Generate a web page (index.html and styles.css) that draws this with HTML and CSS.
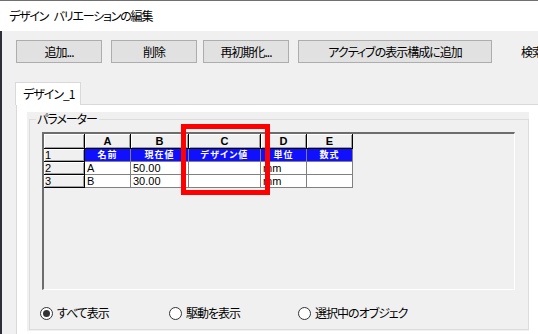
FILE: index.html
```html
<!DOCTYPE html>
<html lang="ja">
<head>
    <meta charset="UTF-8">
    <meta name="viewport" content="width=device-width, initial-scale=1.0">
    <title>デザイン バリエーションの編集</title>
    <link rel="stylesheet" href="styles.css">
</head>
<body>
    <div class="window">
        <div class="titlebar">デザイン バリエーションの編集</div>
        <div class="client">
            <div class="toolbar">
                <button class="btn btn-add">追加...</button>
                <button class="btn btn-delete">削除</button>
                <button class="btn btn-reset">再初期化...</button>
                <button class="btn btn-wide">アクティブの表示構成に追加</button>
                <span class="search-label">検索</span>
            </div>
            <div class="tabs">
                <div class="tab">デザイン_1</div>
            </div>
            <div class="tab-panel">
                <div class="group-wrap">
                    <fieldset class="group">
                        <legend>パラメーター</legend>
                        <div class="sheet">
                            <div class="sheet-grid">
                                <div class="cell head"></div>
                                <div class="cell head col">A</div>
                                <div class="cell head col">B</div>
                                <div class="cell head col">C</div>
                                <div class="cell head col">D</div>
                                <div class="cell head col">E</div>

                                <div class="cell head row">1</div>
                                <div class="cell title">名前</div>
                                <div class="cell title">現在値</div>
                                <div class="cell title">デザイン値</div>
                                <div class="cell title">単位</div>
                                <div class="cell title">数式</div>

                                <div class="cell head row">2</div>
                                <div class="cell">A</div>
                                <div class="cell">50.00</div>
                                <div class="cell"></div>
                                <div class="cell">mm</div>
                                <div class="cell"></div>

                                <div class="cell head row">3</div>
                                <div class="cell">B</div>
                                <div class="cell">30.00</div>
                                <div class="cell"></div>
                                <div class="cell">mm</div>
                                <div class="cell"></div>
                            </div>
                            <!-- highlight around column C -->
                            <div class="highlight"></div>
                        </div>
                        <div class="radios">
                            <label class="radio"><span class="dot checked"></span>すべて表示</label>
                            <label class="radio"><span class="dot"></span>駆動を表示</label>
                            <label class="radio"><span class="dot"></span>選択中のオブジェク</label>
                        </div>
                    </fieldset>
                </div>
            </div>
        </div>
    </div>
</body>
</html>
```

FILE: styles.css
```css
html, body {
    margin: 0;
    padding: 0;
    width: 538px;
    height: 334px;
    overflow: hidden;
    background: #fff;
}
body {
    font-family: "Noto Sans CJK JP", "Noto Sans", sans-serif;
    font-size: 12px;
    font-feature-settings: "palt";
    letter-spacing: -1px;
    color: #000;
}
.window {
    height: 334px;
    display: flex;
    flex-direction: column;
}
.titlebar {
    height: 30px;
    line-height: 30px;
    border-top: 1px solid #707070;
    padding-left: 9px;
    letter-spacing: -1.2px;
    word-spacing: 4px;
    background: #fff;
}
.client {
    flex: 1;
    background: #f0f0f0;
    border-left: 2px solid #2e2e3a;
    display: flex;
    flex-direction: column;
    overflow: hidden;
}
.toolbar {
    display: flex;
    align-items: center;
    padding: 9px 0 0 14px;
    white-space: nowrap;
}
.btn {
    flex-shrink: 0;
    height: 23px;
    width: 86px;
    margin: 0;
    padding: 0;
    font: inherit;
    letter-spacing: inherit;
    color: #000;
    background: #e1e1e1;
    border: 1px solid #adadad;
}
.btn-delete {
    margin-left: 9px;
}
.btn-reset {
    margin-left: 6px;
}
.btn-wide {
    width: 194px;
    margin-left: 9px;
}
.search-label {
    flex-shrink: 0;
    margin-left: 29px;
}
.tabs {
    display: flex;
    margin-top: 19px;
    padding-left: 13px;
}
.tab {
    position: relative;
    width: 57px;
    height: 22px;
    line-height: 22px;
    padding-left: 7px;
    margin-bottom: -1px;
    background: #fff;
    border: 1px solid #d9d9d9;
    border-bottom: none;
}
.tab-panel {
    flex: 1;
    margin-left: 14px;
    background: #fff;
    border-top: 1px solid #d9d9d9;
    border-left: 1px solid #d9d9d9;
    padding: 7px 0 0 10px;
}
.group-wrap {
    width: 500px;
    background: #f0f0f0;
    padding-left: 2px;
    padding-bottom: 1px;
}
.group {
    margin: 0;
    width: 500px;
    box-sizing: border-box;
    border: 1px solid #dcdcdc;
    padding: 6px 0 9px 6px;
}
.group legend {
    padding: 0 2px 0 1px;
    line-height: 14px;
}
.sheet {
    position: relative;
    width: 470px;
    height: 155px;
    margin-left: 6px;
    border-top: 2px solid #6d6d6d;
    border-left: 2px solid #6d6d6d;
    border-right: 1px solid #fff;
    border-bottom: 1px solid #fff;
    background: #f0f0f0;
}
.sheet-grid {
    display: grid;
    grid-template-columns: 41px 46px 58px 72px 46px 46px;
    grid-template-rows: 15px 13px 13px 13px;
    width: 309px;
    font-family: "Liberation Sans", Arial, sans-serif;
    font-size: 11px;
    letter-spacing: 0;
}
.cell {
    box-sizing: border-box;
    background: #fff;
    border-right: 1px solid #808080;
    border-bottom: 1px solid #808080;
    padding-left: 2px;
    line-height: 12px;
    white-space: nowrap;
    overflow: hidden;
}
.head {
    background: #f0f0f0;
    border-right-color: #000;
    border-bottom-color: #000;
    box-shadow: inset 1px 1px #fff, inset -1px -1px #a0a0a0;
}
.col {
    text-align: center;
    font-weight: bold;
    line-height: 14px;
    padding-left: 0;
}
.row {
    padding-left: 1px;
}
.title {
    background: #1010ff;
    color: #fff;
    text-align: center;
    font-family: "Noto Sans CJK JP", sans-serif;
    font-size: 9px;
    font-weight: bold;
    letter-spacing: 1px;
    padding-left: 0;
}
.highlight {
    position: absolute;
    left: 137px;
    top: -10px;
    width: 89px;
    height: 71px;
    box-sizing: border-box;
    border: 5px solid #ff0000;
}
.radios {
    display: grid;
    grid-template-columns: 129px 129px 160px;
    margin: 16px 0 0 4px;
    line-height: 14px;
}
.radio {
    display: flex;
    align-items: center;
    white-space: nowrap;
}
.dot {
    position: relative;
    width: 13px;
    height: 13px;
    box-sizing: border-box;
    border: 1px solid #333;
    border-radius: 50%;
    background: #fff;
    margin-right: 4px;
}
.dot.checked::after {
    content: "";
    position: absolute;
    left: 2px;
    top: 2px;
    width: 7px;
    height: 7px;
    border-radius: 50%;
    background: #333;
}
```
